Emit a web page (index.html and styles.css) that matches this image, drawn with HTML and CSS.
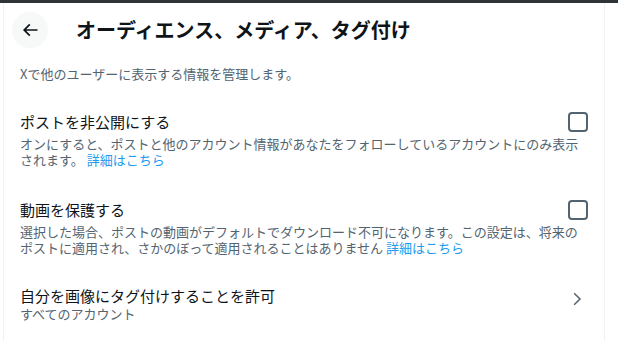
FILE: index.html
```html
<!DOCTYPE html>
<html lang="ja">
<head>
<meta charset="utf-8">
<link rel="stylesheet" href="styles.css">
</head>
<body>
<div class="topbar"></div>
<main class="column">
  <header class="header">
    <div class="back-wrap">
      <button class="back" aria-label="戻る">
        <svg viewBox="0 0 24 24" width="20" height="20"><path d="M7.414 13l5.043 5.04-1.414 1.42L3.586 12l7.457-7.46 1.414 1.42L7.414 11H21v2H7.414z"/></svg>
      </button>
    </div>
    <h1 class="title">オーディエンス、メディア、タグ付け</h1>
  </header>
  <p class="intro">Xで他のユーザーに表示する情報を管理します。</p>

  <section class="item check-item">
    <div class="item-row">
      <span class="item-title">ポストを非公開にする</span>
      <span class="checkbox"></span>
    </div>
    <p class="item-desc">オンにすると、ポストと他のアカウント情報があなたをフォローしているアカウントにのみ表示されます。 <a class="link" href="#">詳細はこちら</a></p>
  </section>

  <section class="item check-item second">
    <div class="item-row">
      <span class="item-title">動画を保護する</span>
      <span class="checkbox"></span>
    </div>
    <p class="item-desc">選択した場合、ポストの動画がデフォルトでダウンロード不可になります。この設定は、将来のポストに適用され、さかのぼって適用されることはありません <a class="link" href="#">詳細はこちら</a></p>
  </section>

  <section class="item link-item">
    <div class="link-text">
      <span class="item-title">自分を画像にタグ付けすることを許可</span>
      <span class="sub">すべてのアカウント</span>
    </div>
    <svg class="chevron" viewBox="0 0 24 24" width="18" height="18"><path d="M14.586 12L7.543 4.96l1.414-1.42L17.414 12l-8.457 8.46-1.414-1.42L14.586 12z"/></svg>
  </section>
</main>
</body>
</html>
```

FILE: styles.css
```css
* { box-sizing: border-box; }
html, body { margin: 0; padding: 0; background: #fff; }
body {
  font-family: "Noto Sans CJK JP", "Noto Sans", sans-serif;
  color: #0f1419;
  height: 341px;
  overflow: hidden;
}
.topbar { height: 3px; background: #2f3336; }
.column {
  margin-left: 3px;
  width: 602px;
  min-height: 338px;
  border-left: 1px solid #eff3f4;
  border-right: 1px solid #eff3f4;
}
.header {
  height: 54px;
  display: flex;
  align-items: center;
  padding: 0 16px 0 8px;
}
.back-wrap { width: 64px; display: flex; }
.back {
  width: 36px; height: 36px;
  border-radius: 50%;
  border: 0;
  background: #f7f9f9;
  display: flex; align-items: center; justify-content: center;
  padding: 0;
}
.back svg { fill: #0f1419; }
.title {
  margin: 0;
  font-size: 20px;
  line-height: 24px;
  font-weight: 700;
}
.intro {
  margin: 0;
  padding: 9px 16px 0;
  font-size: 13px;
  line-height: 16px;
  color: #536471;
}
.item { padding: 0 16px; }
.check-item { padding-top: 30px; }
.check-item.second { padding-top: 32px; }
.item-row {
  display: flex;
  align-items: center;
  justify-content: space-between;
  height: 20px;
}
.item-title { display: block; font-size: 15px; line-height: 20px; }
.checkbox {
  width: 20px; height: 20px;
  border: 2px solid #536471;
  border-radius: 4px;
}
.item-desc {
  margin: 4px 0 0;
  font-size: 13px;
  line-height: 16px;
  color: #536471;
  padding-right: 8px;
}
.link { display: inline-block; line-height: 16px; color: #1d9bf0; text-decoration: none; }
.link-item {
  display: flex;
  align-items: center;
  justify-content: space-between;
  padding-top: 30px;
}
.link-text { display: flex; flex-direction: column; }
.sub { display: block; font-size: 13px; line-height: 16px; color: #536471; }
.chevron { fill: #536471; margin-right: 2px; margin-bottom: 10px; }
```
